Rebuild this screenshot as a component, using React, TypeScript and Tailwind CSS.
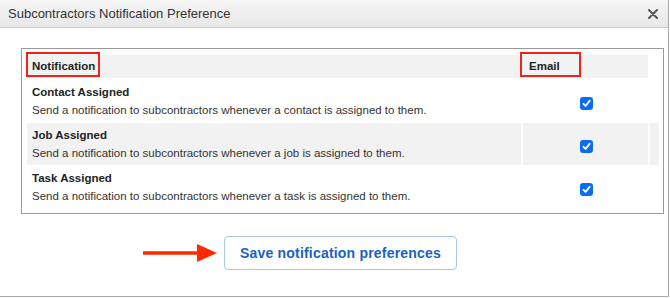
import { useState } from 'react';

const ROWS = [
  { title: 'Contact Assigned', text: 'Send a notification to subcontractors whenever a contact is assigned to them.' },
  { title: 'Job Assigned', text: 'Send a notification to subcontractors whenever a job is assigned to them.' },
  { title: 'Task Assigned', text: 'Send a notification to subcontractors whenever a task is assigned to them.' },
];

function Check({ checked, onChange }: { checked: boolean; onChange: () => void }) {
  return (
    <button
      type="button"
      onClick={onChange}
      className={`w-[13px] h-[13px] rounded-[3px] flex items-center justify-center ${checked ? 'bg-[#0a6cf0]' : 'bg-white border border-gray-400'}`}
    >
      {checked && (
        <svg width="9" height="9" viewBox="0 0 9 9" fill="none">
          <path d="M1.5 4.8 L3.6 6.9 L7.6 1.8" stroke="white" strokeWidth="1.9" strokeLinecap="round" strokeLinejoin="round" />
        </svg>
      )}
    </button>
  );
}

export default function App() {
  const [checks, setChecks] = useState([true, true, true]);

  function toggle(i: number) {
    setChecks(checks.map((c, j) => (j === i ? !c : c)));
  }

  return (
    <div className="w-[670px] h-[298px] bg-white font-['Liberation_Sans',Arial,sans-serif] text-[#222]">
      <div className="w-[669px] h-[297px] border-r border-b border-[#a9a9a9] flex flex-col">
        {/* title bar */}
        <div className="h-[28px] shrink-0 flex items-center justify-between pl-[8px] pr-[10px] bg-gradient-to-b from-[#f6f6f6] to-[#e7e7e7] border-b border-[#c9c9c9]">
          <span className="text-[13px] text-[#333]">Subcontractors Notification Preference</span>
          <svg width="10" height="10" viewBox="0 0 10 10">
            <path d="M1 1 L9 9 M9 1 L1 9" stroke="#555" strokeWidth="2" strokeLinecap="round" />
          </svg>
        </div>

        {/* table */}
        <div className="ml-[21px] mr-[4px] mt-[20px] border border-[#9a9a9a] pt-[6px] pl-[5px] pr-[4px] pb-[5px] text-[11.5px]">
          <div className="w-[621px] h-[23px] bg-[#f2f2f2] flex items-center font-bold">
            <div className="relative w-[496px] pl-[5px]">
              Notification
              <span className="absolute left-[-1px] top-[-6px] w-[74px] h-[25px] border-2 border-[#f0231b]" />
            </div>
            <div className="relative pl-[6px]">
              Email
              <span className="absolute left-[-3px] top-[-6px] w-[61px] h-[25px] border-2 border-[#f0231b]" />
            </div>
          </div>
          <div className="flex flex-col gap-[1px] mt-[2px]">
            {ROWS.map((r, i) => (
              <div key={r.title} className="flex gap-[2px] h-[42px]">
                <div className={`w-[494px] pl-[5px] pt-[4px] ${i === 1 ? 'bg-[#f2f2f2]' : ''}`}>
                  <div className="font-bold leading-[16px]">{r.title}</div>
                  <div className="leading-[16px] mt-[2px] text-[#333]">{r.text}</div>
                </div>
                <div className={`w-[125px] flex items-center justify-center pl-[2px] pt-[4px] ${i === 1 ? 'bg-[#f2f2f2]' : ''}`}>
                  <Check checked={checks[i]} onChange={() => toggle(i)} />
                </div>
                <div className={`w-[9px] ${i === 1 ? 'bg-[#f2f2f2]' : ''}`} />
              </div>
            ))}
          </div>
        </div>

        {/* footer */}
        <div className="flex items-center gap-[7px] mt-[22px] pl-[143px]">
          <svg width="74" height="20" viewBox="0 0 74 20">
            <path d="M0 10 H56" stroke="#ff2a00" strokeWidth="3.5" />
            <path d="M54 1 L74 10 L54 19 Z" fill="#ff2a00" />
          </svg>
          <button
            type="button"
            className="w-[233px] h-[34px] rounded-[4px] border border-[#a9c6e6] bg-white text-[14px] font-bold text-[#1a62c0] tracking-[0.2px]"
          >
            Save notification preferences
          </button>
        </div>
      </div>
    </div>
  );
}
